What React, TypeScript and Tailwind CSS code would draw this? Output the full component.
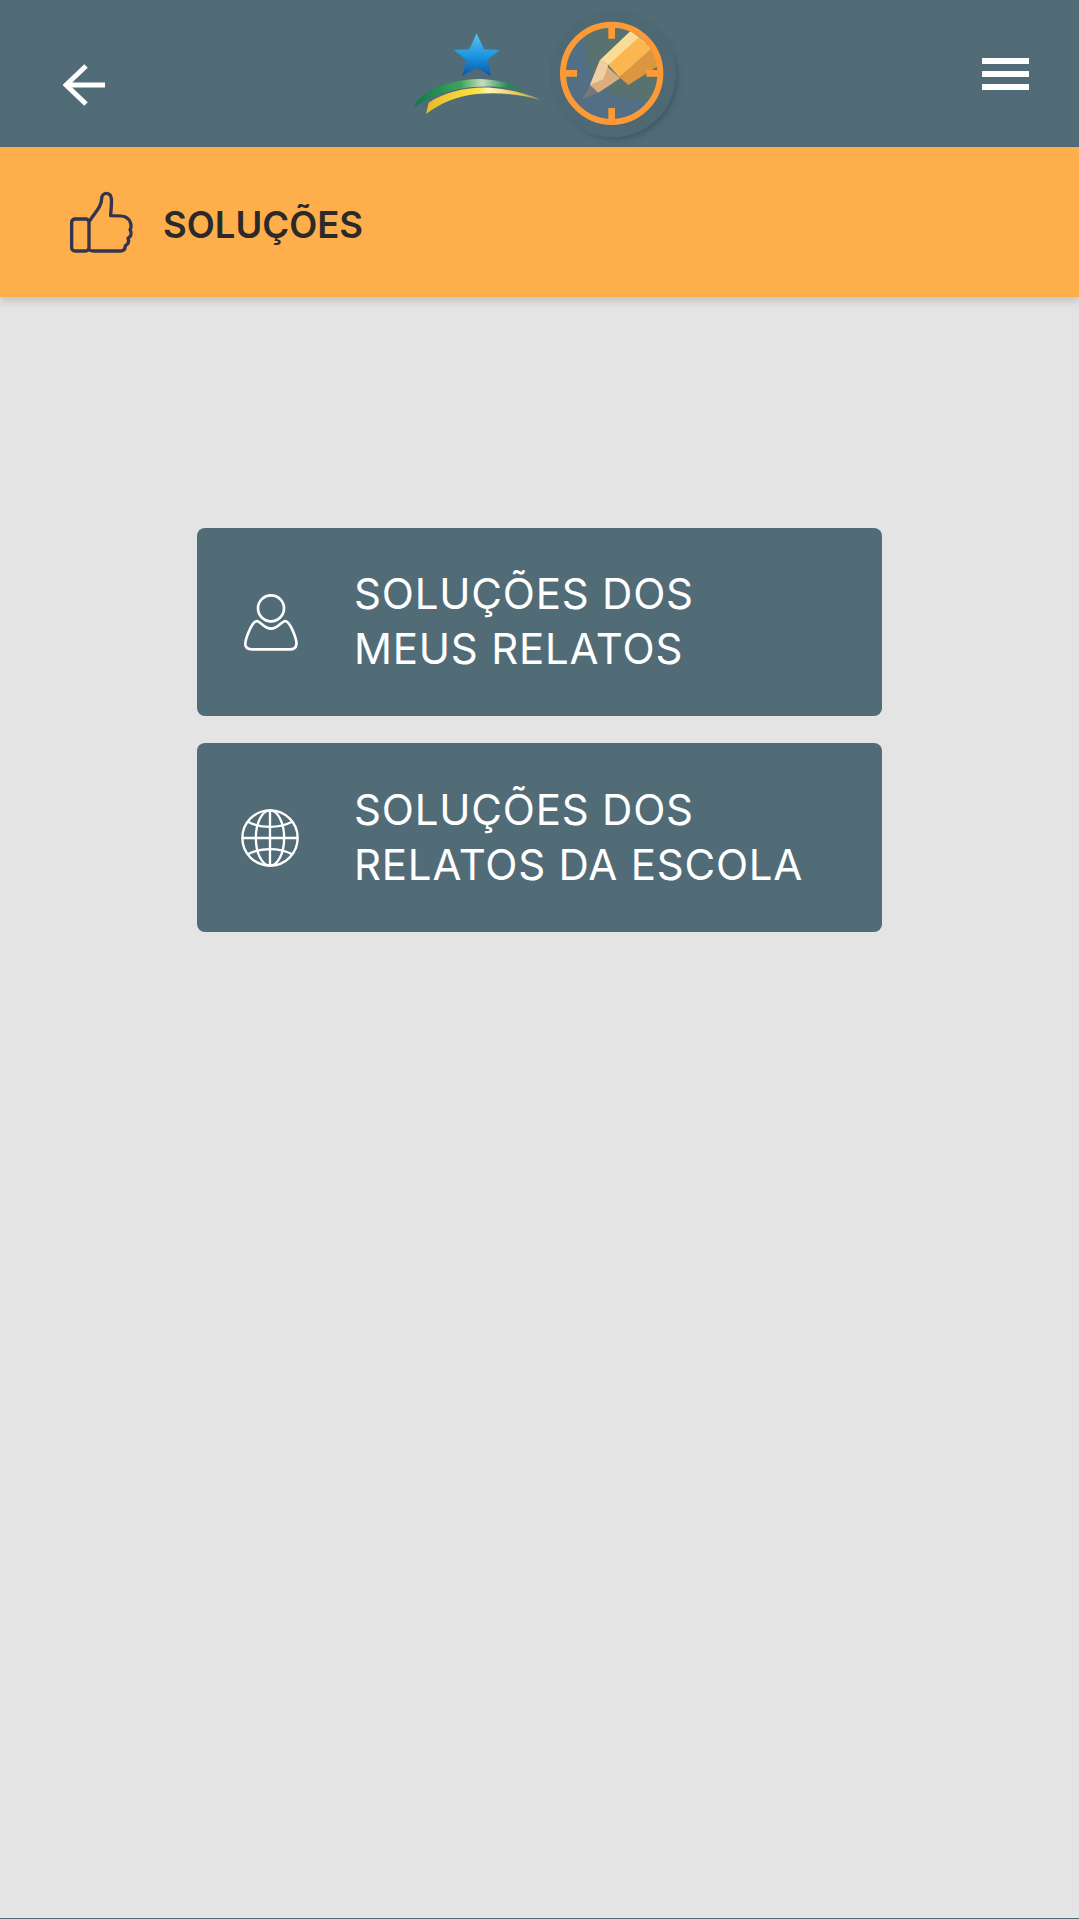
import React from "react";

function Logo() {
  return (
    <svg width="310" height="147" viewBox="0 0 930 441" className="block shrink-0">
      <defs>
        <linearGradient id="g" x1="0" x2="1" y1="0" y2="0">
          <stop offset="0" stopColor="#0d7a4c" />
          <stop offset="0.4" stopColor="#3fa45a" />
          <stop offset="0.58" stopColor="#c7dcc0" />
          <stop offset="0.8" stopColor="#1f8a54" />
          <stop offset="1" stopColor="#526b76" />
        </linearGradient>
        <linearGradient id="y" x1="0" x2="1" y1="0" y2="0">
          <stop offset="0" stopColor="#e8b92f" />
          <stop offset="0.45" stopColor="#ffe23f" />
          <stop offset="0.55" stopColor="#fff6b5" />
          <stop offset="0.8" stopColor="#e6c84a" />
          <stop offset="1" stopColor="#8f9a70" />
        </linearGradient>
        <linearGradient id="s" x1="0" x2="0" y1="0" y2="1">
          <stop offset="0" stopColor="#5cc3f2" />
          <stop offset="0.55" stopColor="#1a93e0" />
          <stop offset="1" stopColor="#0c55a8" />
        </linearGradient>
        <filter id="b" x="-20%" y="-20%" width="140%" height="140%"><feGaussianBlur stdDeviation="9" /></filter>
        <clipPath id="c"><circle cx="665" cy="220" r="140" /></clipPath>
      </defs>
      <path d="M260 100L282 148L330 150L292 180L303 228L260 203L217 228L228 180L192 150L238 148Z" fill="url(#s)" />
      <path d="M72 322C80 280 180 235 270 237C330 238 390 258 425 282C360 258 300 256 240 262C180 268 120 290 72 322Z" fill="url(#g)" />
      <path d="M108 342L116 308C170 272 250 258 310 264C370 270 420 284 452 300C390 282 320 276 260 282C200 288 150 310 108 342Z" fill="url(#y)" />
      <circle cx="680" cy="236" r="182" fill="#3c525d" opacity="0.85" filter="url(#b)" />
      <circle cx="668" cy="222" r="190" fill="#4f6974" />
      <circle cx="665" cy="220" r="140" fill="#526f85" />
      <g clipPath="url(#c)">
        <circle cx="745" cy="140" r="160" fill="#58736f" />
        <path d="M577 297L600 255L625 278Z" fill="#77787c" />
        <path d="M600 255L630 180L690 235L625 278Z" fill="#dcae7e" />
        <path d="M600 255L630 180L655 195L640 238Z" fill="#f0cfa0" />
        <path d="M630 180L722 92L770 130L655 195Z" fill="#fbdc97" />
        <path d="M655 195L745 113L790 148L688 232Z" fill="#fbb650" />
        <path d="M688 232L785 145L825 185L715 255Z" fill="#dc9642" />
      </g>
      <circle cx="665" cy="220" r="146" fill="none" stroke="#fd9a35" strokeWidth="18" />
      <path d="M665 80V116M665 324V360M525 220H561M769 220H805" stroke="#fd9a35" strokeWidth="20" />
    </svg>
  );
}

function Thumb() {
  return (
    <svg width="64" height="62" viewBox="0 0 192 186" fill="none" stroke="#33344f" strokeWidth="10" strokeLinejoin="round" strokeLinecap="round" className="block shrink-0">
      <rect x="5" y="84" width="52" height="96" rx="10" />
      <path d="M57 176C60 179 64 180 70 180H150C160 180 166 174 166 164C174 160 178 152 174 142C182 138 187 128 180 116C186 108 184 86 166 78C160 74 130 74 122 74C122 60 126 40 124 22C122 2 96 2 95 22C94 50 76 62 60 88" />
    </svg>
  );
}

function Person() {
  return (
    <svg width="54" height="57" viewBox="0 0 162 171" fill="none" stroke="#fff" strokeWidth="8" strokeLinejoin="round" className="block shrink-0">
      <circle cx="81" cy="43" r="39" />
      <path d="M38 81C50 82 60 104 81 104C102 104 112 82 124 81C140 84 160 140 157 152C155 164 148 166 138 166H24C12 166 5 162 4 152C3 138 22 84 38 81Z" />
    </svg>
  );
}

function Globe() {
  return (
    <svg width="58" height="58" viewBox="0 0 172 172" fill="none" stroke="#fff" strokeWidth="7" className="block shrink-0">
      <circle cx="86" cy="86" r="82" />
      <ellipse cx="86" cy="86" rx="42" ry="82" />
      <path d="M86 4V168M4 86H168" />
      <path d="M20 38C60 58 112 58 152 38" />
      <path d="M20 134C60 114 112 114 152 134" />
    </svg>
  );
}

function Card({ icon, lines, iconClass, heightClass }: { icon: React.ReactNode; lines: string[]; iconClass: string; heightClass: string }) {
  return (
    <div className={`flex w-[685px] items-center rounded-[8px] bg-[#516c77] ${heightClass}`}>
      <div className={iconClass}>{icon}</div>
      <div className="mb-[2px] ml-[-1px] text-[42px] font-normal leading-[55px] tracking-[0.8px] text-white">
        {lines.map((l) => (
          <div key={l} className="whitespace-nowrap">{l}</div>
        ))}
      </div>
    </div>
  );
}

export default function App() {
  return (
    <div className="flex h-[1919px] w-[1079px] flex-col overflow-hidden bg-[#e4e4e4] font-['Inter','Noto_Sans',sans-serif]">
      <header className="flex h-[147px] shrink-0 items-start bg-[#516c77]">
        <div className="ml-[63px] mt-[64px] w-[42px] shrink-0">
          <svg width="42" height="42" viewBox="0 0 42 42" fill="none" stroke="#fff" strokeWidth="5" className="block">
            <path d="M42 21H3M23 2L3 21L23 40" />
          </svg>
        </div>
        <div className="ml-[285px] shrink-0"><Logo /></div>
        <div className="ml-[282px] mt-[58px] flex w-[47px] shrink-0 flex-col gap-[7px]">
          <div className="h-[6px] bg-white" />
          <div className="h-[6px] bg-white" />
          <div className="h-[6px] bg-white" />
        </div>
      </header>
      <div className="z-10 flex h-[150px] shrink-0 items-center bg-[#ffae4c] pl-[70px] shadow-[0_4px_8px_rgba(0,0,0,0.16)]">
        <Thumb />
        <h1 className="ml-[29px] mt-[6px] text-[36.5px] font-semibold leading-none text-[#2a2a2a]">SOLUÇÕES</h1>
      </div>
      <main className="flex flex-1 flex-col items-center gap-[27px] pt-[231px]">
        <Card icon={<Person />} lines={["SOLUÇÕES DOS", "MEUS RELATOS"]} iconClass="ml-[47px] mr-[57px] shrink-0" heightClass="h-[188px]" />
        <Card icon={<Globe />} lines={["SOLUÇÕES DOS", "RELATOS DA ESCOLA"]} iconClass="ml-[44px] mr-[56px] shrink-0" heightClass="h-[189px]" />
      </main>
      <div className="h-px shrink-0 bg-[#516c77]" />
    </div>
  );
}
